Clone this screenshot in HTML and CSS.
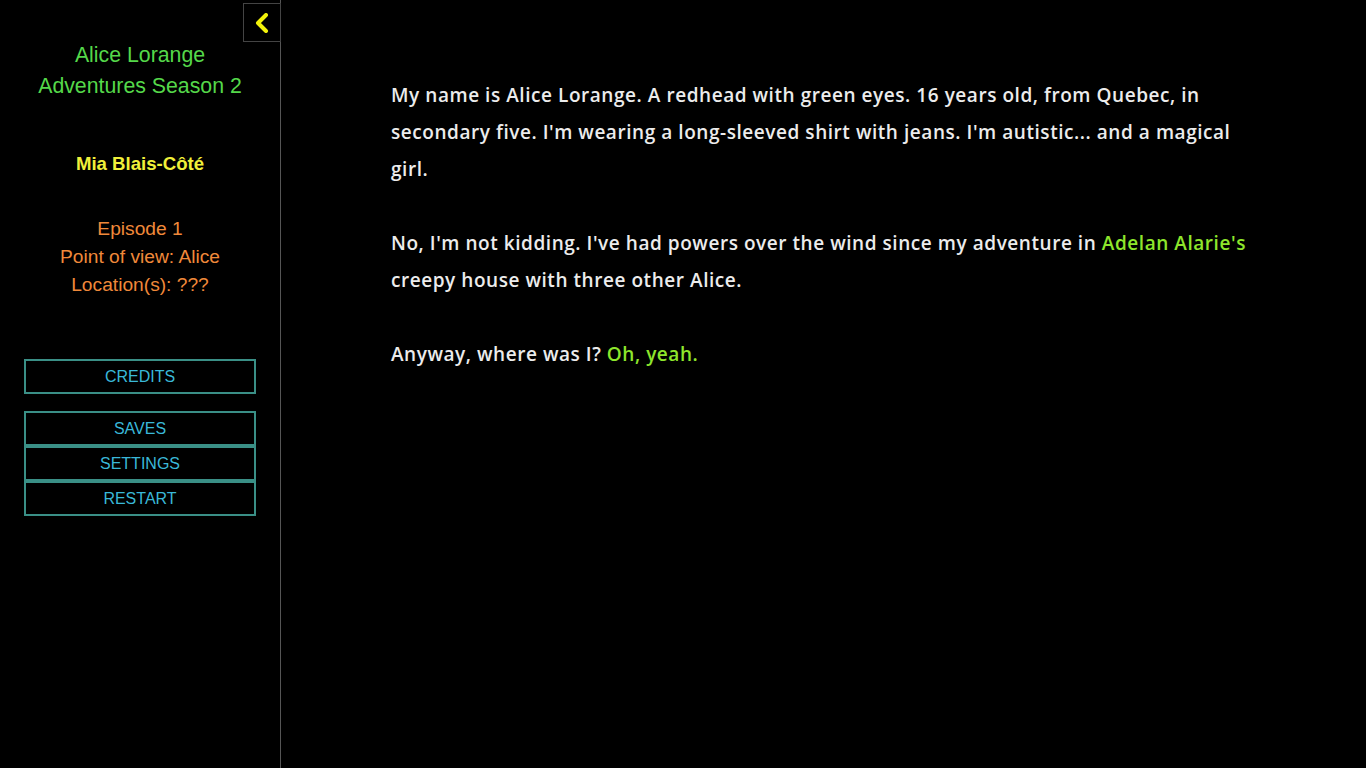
FILE: index.html
```html
<!DOCTYPE html>
<html lang="en">
<head>
<meta charset="utf-8">
<title>Alice Lorange Adventures Season 2</title>
<link rel="stylesheet" href="styles.css">
</head>
<body>
<div class="app">
  <aside class="sidebar">
    <button class="toggle" aria-label="Collapse">
      <svg width="14" height="20" viewBox="0 0 14 20"><polyline points="11,2 3,10 11,18" fill="none" stroke="#f2f20a" stroke-width="4" stroke-linecap="round" stroke-linejoin="round"/></svg>
    </button>
    <h1 class="title">Alice Lorange<br>Adventures Season 2</h1>
    <p class="author">Mia Blais-Côté</p>
    <p class="info">Episode 1<br>Point of view: Alice<br>Location(s): ???</p>
    <nav class="menu">
      <div class="menu-group">
        <a class="menu-btn">CREDITS</a>
      </div>
      <div class="menu-group">
        <a class="menu-btn">SAVES</a>
        <a class="menu-btn">SETTINGS</a>
        <a class="menu-btn">RESTART</a>
      </div>
    </nav>
  </aside>
  <main class="story">
    <div class="passage">
      <p>My name is Alice Lorange. A redhead with green eyes. 16 years old, from Quebec, in secondary five. I'm wearing a long-sleeved shirt with jeans. I'm autistic... and a magical girl.</p>
      <p>No, I'm not kidding. I've had powers over the wind since my adventure in <span class="hl">Adelan Alarie's</span> creepy house with three other Alice.</p>
      <p>Anyway, where was I? <span class="hl">Oh, yeah.</span></p>
    </div>
  </main>
</div>
</body>
</html>
```
FILE: styles.css
```css
html, body {
  margin: 0;
  padding: 0;
  background: #000;
  height: 100%;
}
.app {
  display: flex;
  min-height: 100vh;
}
.sidebar {
  position: relative;
  width: 280px;
  flex: 0 0 280px;
  border-right: 1px solid #555;
  font-family: "Liberation Sans", Arial, sans-serif;
  text-align: center;
  padding-top: 40px;
  box-sizing: content-box;
}
.toggle {
  position: absolute;
  top: 3px;
  right: -1px;
  width: 38px;
  height: 39px;
  background: #000;
  border: 1px solid #444;
  padding: 0;
  display: flex;
  align-items: center;
  justify-content: center;
}
.title {
  margin: 0;
  font-size: 21.3px;
  font-weight: normal;
  line-height: 31px;
  color: #55d84a;
}
.author {
  margin: 50px 0 0;
  font-size: 18.6px;
  font-weight: bold;
  line-height: 24px;
  color: #f0f03a;
}
.info {
  margin: 39px 0 0;
  font-size: 19.2px;
  line-height: 28px;
  color: #f0893a;
}
.menu {
  margin: 60px 24px 0;
  display: flex;
  flex-direction: column;
  gap: 17px;
}
.menu-group {
  display: flex;
  flex-direction: column;
}
.menu-btn {
  display: block;
  height: 35px;
  box-sizing: border-box;
  border: 2px solid #3a8f86;
  color: #3ab8d8;
  font-size: 16px;
  line-height: 31px;
  text-transform: uppercase;
}
.story {
  flex: 1;
  padding-top: 77px;
}
.passage {
  max-width: 865px;
  margin: 0 auto;
  font-family: "Open Sans", "DejaVu Sans", sans-serif;
  font-size: 19px;
  font-weight: 600;
  letter-spacing: 0.55px;
  line-height: 37px;
  color: #ececec;
}
.passage p {
  margin: 0 0 37px;
}
.hl {
  color: #8ee62c;
}
```
